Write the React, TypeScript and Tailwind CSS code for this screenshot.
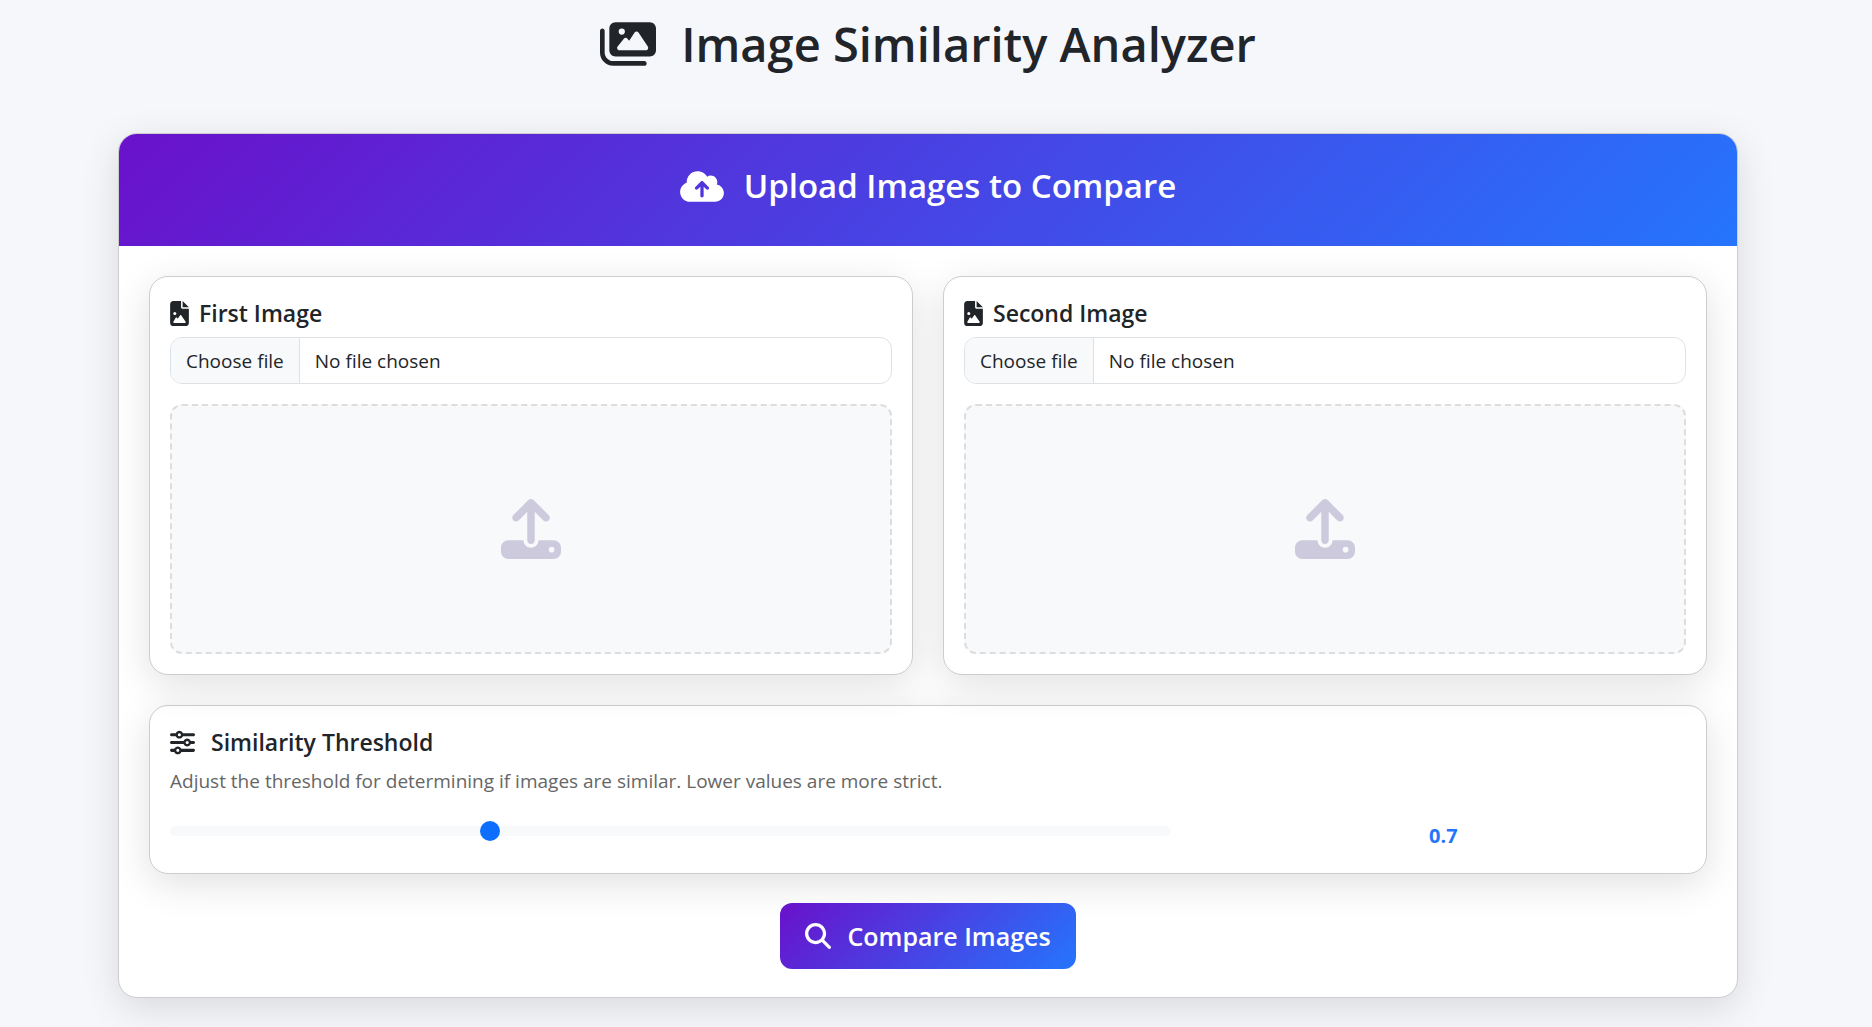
import { useState } from "react";
import {
  FaCloudArrowUp,
  FaFileImage,
  FaImages,
  FaMagnifyingGlass,
  FaSliders,
  FaUpload,
} from "react-icons/fa6";

const panel =
  "rounded-[19px] border border-[#cdcdce] bg-white shadow-[0_10px_38px_rgba(0,0,0,0.12)]";

function UploadPanel({ id, title }: { id: string; title: string }) {
  const [fileName, setFileName] = useState("No file chosen");
  return (
    <section className={`${panel} p-5`}>
      <h3 className="mb-2 flex h-[32px] items-center text-[23px] leading-[32px] font-semibold">
        <FaFileImage className="mr-2.5 h-[25px] w-[19px]" />
        {title}
      </h3>
      <label
        htmlFor={id}
        className="relative flex h-[47px] cursor-pointer overflow-hidden rounded-xl border border-[#dee2e6] text-[19px] leading-[30px]"
      >
        <input
          id={id}
          type="file"
          accept="image/*"
          aria-label={title}
          className="sr-only"
          onChange={(e) => setFileName(e.target.files?.[0]?.name ?? "No file chosen")}
        />
        <span className="border-r border-[#dee2e6] bg-[#f8f9fa] px-[15px] pt-2">Choose file</span>
        <span className="px-[15px] pt-2">{fileName}</span>
      </label>
      <div className="mt-5 flex h-[250px] items-center justify-center rounded-xl border-2 border-dashed border-[#dddddd] bg-[#f8f9fb]">
        <FaUpload className="size-[60px] text-[#cdcadd]" />
      </div>
    </section>
  );
}

export default function App() {
  const [threshold, setThreshold] = useState(0.7);
  return (
    <div className="min-h-screen bg-[#f5f7fb] pr-4 pb-[30px] font-['Open_Sans',sans-serif] text-[#212529]">
      <main className="mx-auto max-w-[1650px] px-[15px] pt-[14px]">
        <h1 className="mb-[59px] flex h-[60px] items-center justify-center text-[47px] leading-[60px] font-semibold">
          <FaImages className="mr-[25px] h-[50px] w-[56px]" />
          Image Similarity Analyzer
        </h1>

        <div className={`${panel} overflow-hidden`}>
          <header className="flex h-[112px] items-center justify-center bg-linear-[135deg,#6a11cb_0%,#2575fc_100%] pb-2 text-white">
            <FaCloudArrowUp className="mr-5 h-[35px] w-[44px]" />
            <h2 className="text-[33px] leading-[42px] font-semibold">Upload Images to Compare</h2>
          </header>

          <div className="px-[30px] pt-[30px] pb-7">
            <div className="grid grid-cols-2 gap-[30px]">
              <UploadPanel id="first-image" title="First Image" />
              <UploadPanel id="second-image" title="Second Image" />
            </div>

            <section className={`${panel} mt-[30px] px-5 pt-5 pb-[18px]`}>
              <label
                htmlFor="threshold"
                className="mb-2 flex h-[32px] items-center text-[23px] leading-[32px] font-semibold"
              >
                <FaSliders className="mr-4 size-[25px]" />
                Similarity Threshold
              </label>
              <p className="text-[19px] leading-[30px] text-[#666666]">
                Adjust the threshold for determining if images are similar. Lower values are more strict.
              </p>
              <div className="mt-[21px] grid grid-cols-12 gap-[30px]">
                <div className="col-span-8 flex h-[38px] items-start pt-1">
                  <input
                    id="threshold"
                    type="range"
                    min="0.1"
                    max="2"
                    step="0.1"
                    value={threshold}
                    onChange={(e) => setThreshold(Number(e.target.value))}
                    className="h-5 w-full appearance-none bg-transparent [&::-webkit-slider-runnable-track]:h-2.5 [&::-webkit-slider-runnable-track]:rounded-full [&::-webkit-slider-runnable-track]:bg-[#f8f9fa] [&::-webkit-slider-thumb]:-mt-[5px] [&::-webkit-slider-thumb]:size-5 [&::-webkit-slider-thumb]:appearance-none [&::-webkit-slider-thumb]:rounded-full [&::-webkit-slider-thumb]:bg-[#0d6efd]"
                  />
                </div>
                <output
                  htmlFor="threshold"
                  className="col-span-4 pt-1 text-center text-[20px] leading-[30px] font-bold text-[#2575fc]"
                >
                  {threshold}
                </output>
              </div>
            </section>

            <div className="mt-[29px] flex justify-center">
              <button
                type="button"
                className="flex h-[66px] items-center rounded-xl bg-linear-[135deg,#6a11cb_0%,#2575fc_100%] px-[25px] text-[25px] leading-[32px] font-semibold text-white"
              >
                <FaMagnifyingGlass className="mr-4 size-[26px]" />
                Compare Images
              </button>
            </div>
          </div>
        </div>
      </main>
    </div>
  );
}
